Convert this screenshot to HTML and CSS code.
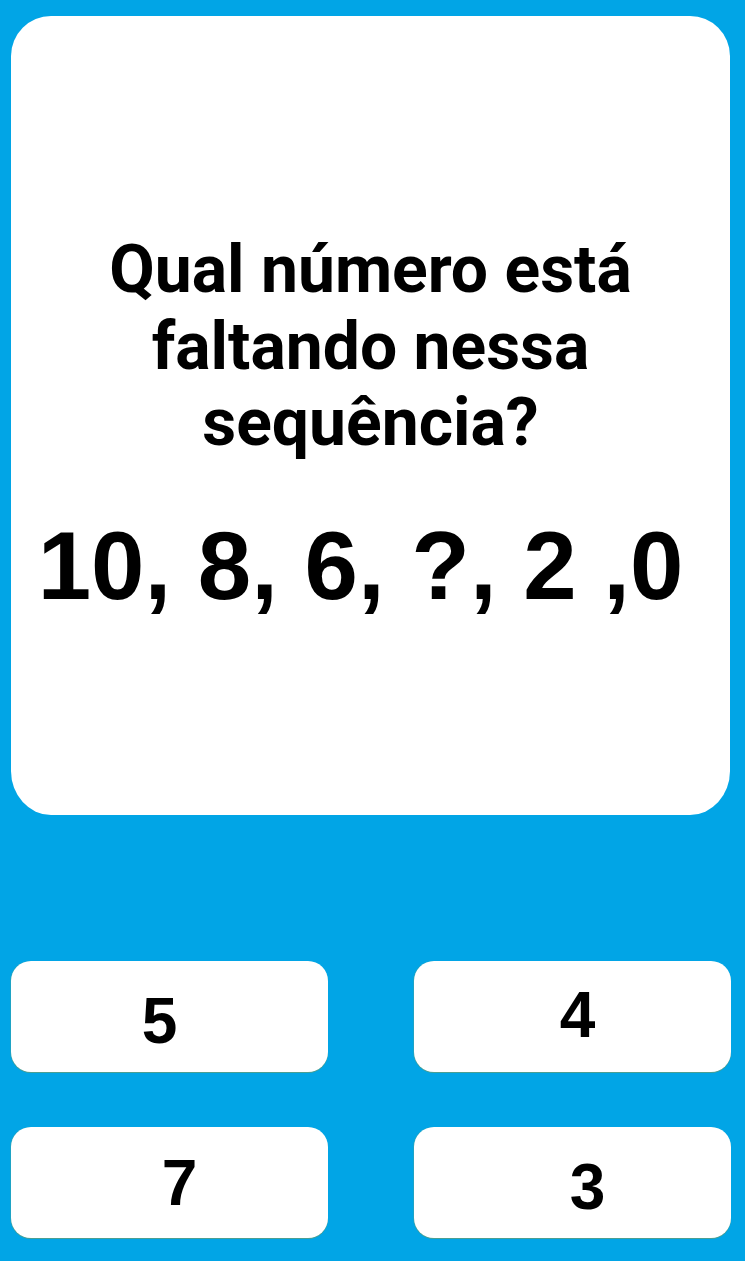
FILE: index.html
```html
<!DOCTYPE html>
<html lang="pt-BR">
<head>
<meta charset="utf-8">
<title>Quiz</title>
<link rel="stylesheet" href="styles.css">
</head>
<body>
<main class="screen">
  <section class="card">
    <h1 class="question">Qual número está<br>faltando nessa<br>sequência?</h1>
    <p class="sequence">10, 8, 6, ?, 2 ,0</p>
  </section>
  <section class="options">
    <button class="option option-a">5</button>
    <button class="option option-b">4</button>
    <button class="option option-c">7</button>
    <button class="option option-d">3</button>
  </section>
</main>
</body>
</html>
```
FILE: styles.css
```css
html, body {
  margin: 0;
  padding: 0;
}
body {
  background: #01a5e6;
  width: 745px;
  height: 1261px;
  overflow: hidden;
}
.screen {
  padding: 16px 15px 0 11px;
  display: flex;
  flex-direction: column;
}
.card {
  background: #ffffff;
  height: 799px;
  border-radius: 40px 40px 40px 40px / 40px 40px 44px 44px;
  box-sizing: border-box;
  padding-top: 216px;
  display: flex;
  flex-direction: column;
  align-items: center;
}
.question {
  margin: 0;
  font-family: Roboto, "Liberation Sans", sans-serif;
  font-weight: 700;
  font-size: 66px;
  line-height: 76.5px;
  color: #000;
  text-align: center;
}
.sequence {
  margin: 50px 0 0 0;
  padding-right: 20px;
  font-family: "Liberation Sans", Arial, sans-serif;
  font-weight: 700;
  font-size: 96px;
  line-height: 108px;
  color: #000;
  text-align: center;
  white-space: nowrap;
}
.options {
  margin-top: 146px;
  display: grid;
  grid-template-columns: 317px 317px;
  grid-auto-rows: 111px;
  column-gap: 86px;
  row-gap: 55px;
}
.option {
  background: #ffffff;
  border: none;
  border-radius: 20px;
  box-shadow: 0 1px 0 #4b9f93, -1px 0 0 rgba(75, 159, 147, 0.4);
  font-family: "Liberation Sans", Arial, sans-serif;
  font-weight: 700;
  font-size: 64px;
  color: #000;
  display: flex;
  align-items: center;
  justify-content: center;
  padding: 0;
}
.option-a { padding: 8px 20px 0 0; }
.option-b { padding: 0 0 4px 10px; }
.option-c { padding: 0 0 0 20px; }
.option-d { padding: 8px 0 0 30px; }
```
